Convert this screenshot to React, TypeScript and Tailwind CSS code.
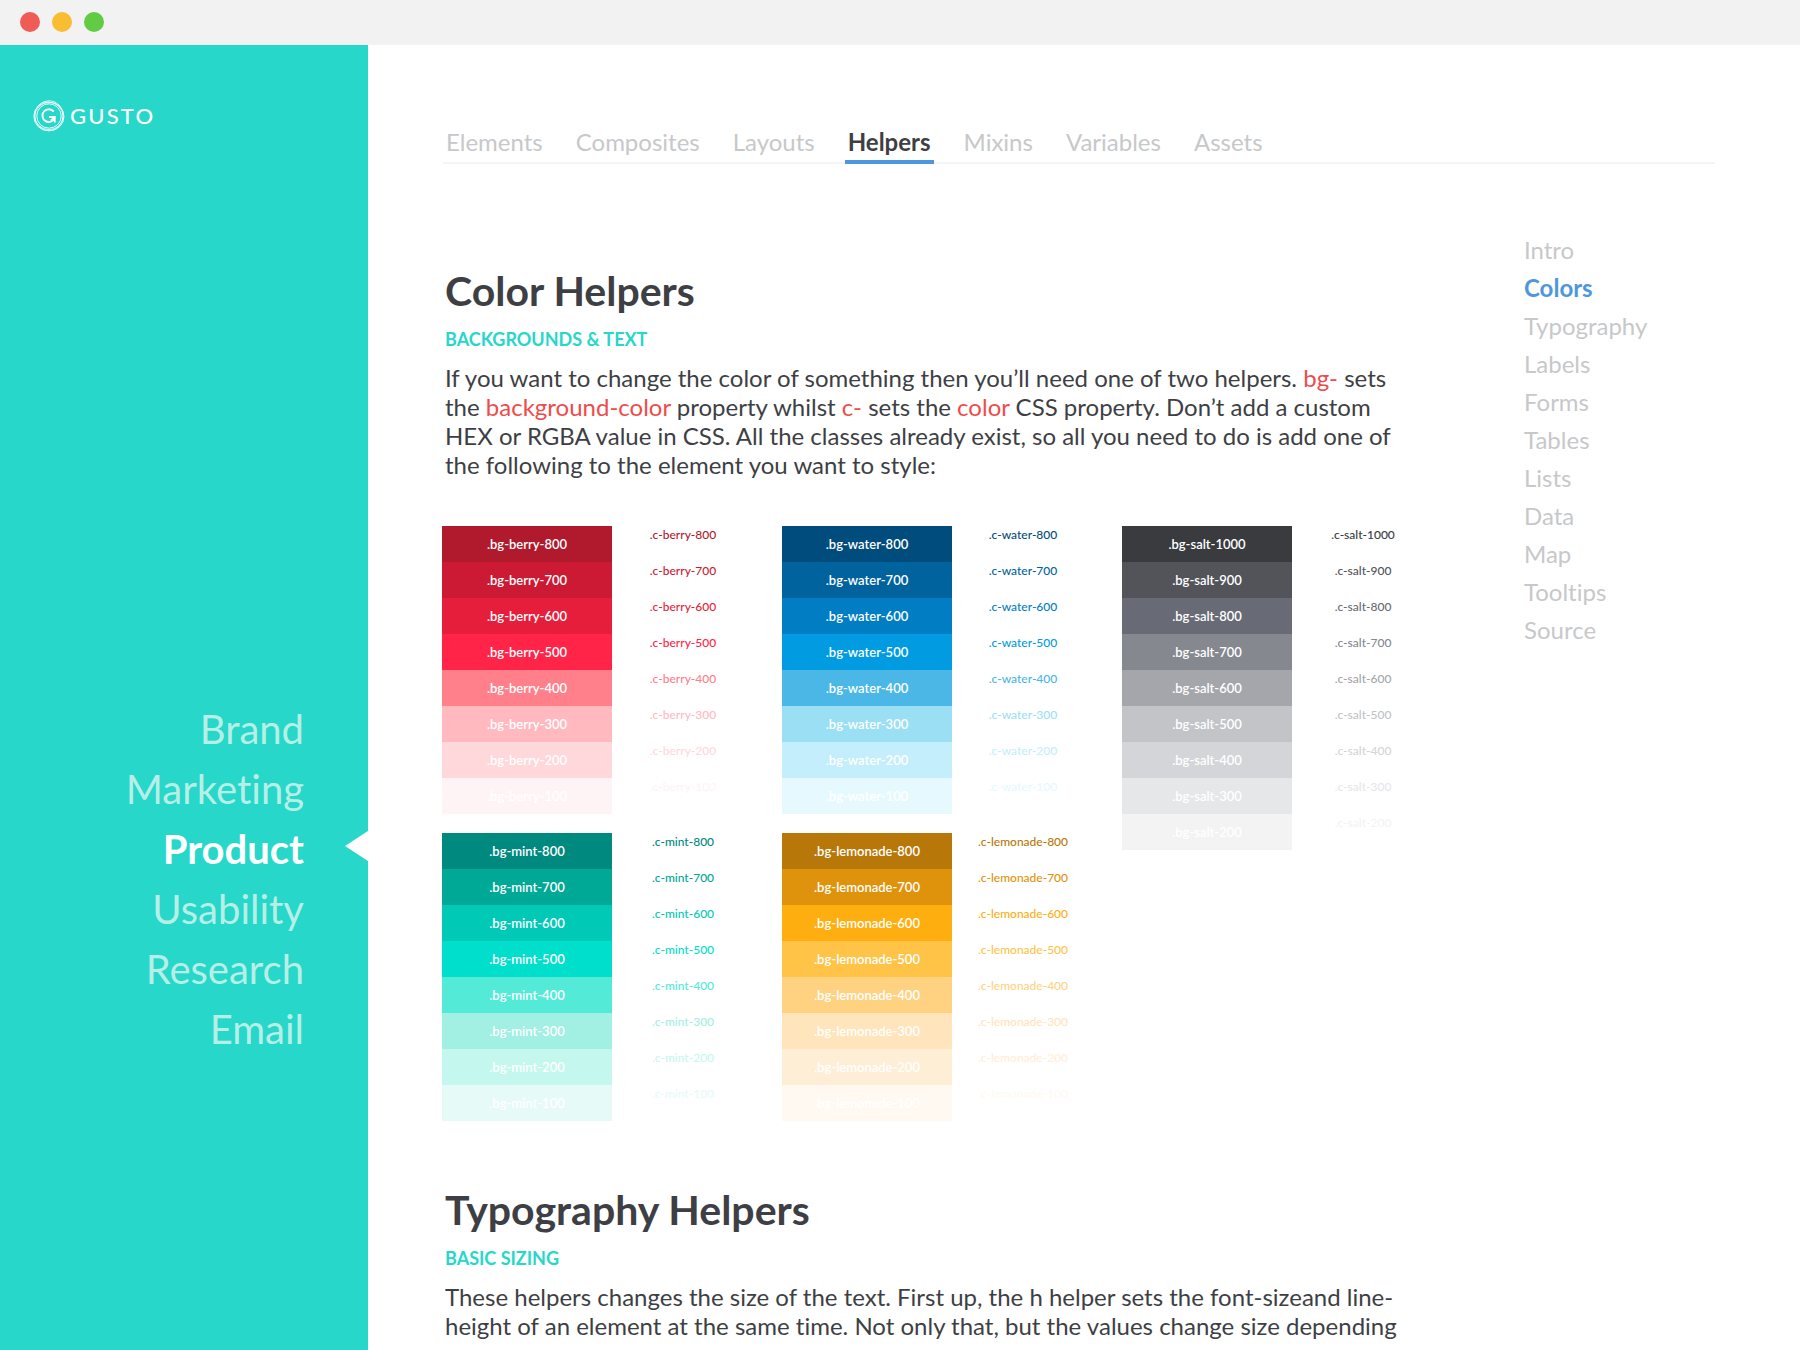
import React from "react";

const sideLinks = ["Brand", "Marketing", "Product", "Usability", "Research", "Email"];
const tabs = ["Elements", "Composites", "Layouts", "Helpers", "Mixins", "Variables", "Assets"];
const anchors = ["Intro", "Colors", "Typography", "Labels", "Forms", "Tables", "Lists", "Data", "Map", "Tooltips", "Source"];

type Shade = { name: string; bg: string; text: string };

const berry: Shade[] = [
  { name: "berry-800", bg: "bg-[#b1192d]", text: "text-[#b1192d]" },
  { name: "berry-700", bg: "bg-[#cc1a34]", text: "text-[#cc1a34]" },
  { name: "berry-600", bg: "bg-[#e61e3b]", text: "text-[#e61e3b]" },
  { name: "berry-500", bg: "bg-[#ff2448]", text: "text-[#ff2448]" },
  { name: "berry-400", bg: "bg-[#ff808b]", text: "text-[#ff808b]" },
  { name: "berry-300", bg: "bg-[#ffb9bf]", text: "text-[#ffb9bf]" },
  { name: "berry-200", bg: "bg-[#ffd8db]", text: "text-[#ffd8db]" },
  { name: "berry-100", bg: "bg-[#fff4f5]", text: "text-[#fff4f5]" },
];

const water: Shade[] = [
  { name: "water-800", bg: "bg-[#004c7c]", text: "text-[#004c7c]" },
  { name: "water-700", bg: "bg-[#00639e]", text: "text-[#00639e]" },
  { name: "water-600", bg: "bg-[#007dc3]", text: "text-[#007dc3]" },
  { name: "water-500", bg: "bg-[#009be1]", text: "text-[#009be1]" },
  { name: "water-400", bg: "bg-[#4ab7e6]", text: "text-[#4ab7e6]" },
  { name: "water-300", bg: "bg-[#9bdff4]", text: "text-[#9bdff4]" },
  { name: "water-200", bg: "bg-[#c4eefb]", text: "text-[#c4eefb]" },
  { name: "water-100", bg: "bg-[#e6f9ff]", text: "text-[#e6f9ff]" },
];

const salt: Shade[] = [
  { name: "salt-1000", bg: "bg-[#3a3b3f]", text: "text-[#3a3b3f]" },
  { name: "salt-900", bg: "bg-[#525459]", text: "text-[#525459]" },
  { name: "salt-800", bg: "bg-[#686b75]", text: "text-[#686b75]" },
  { name: "salt-700", bg: "bg-[#85888f]", text: "text-[#85888f]" },
  { name: "salt-600", bg: "bg-[#a4a6ab]", text: "text-[#a4a6ab]" },
  { name: "salt-500", bg: "bg-[#c2c4c8]", text: "text-[#c2c4c8]" },
  { name: "salt-400", bg: "bg-[#d4d5d8]", text: "text-[#d4d5d8]" },
  { name: "salt-300", bg: "bg-[#e6e7e9]", text: "text-[#e6e7e9]" },
  { name: "salt-200", bg: "bg-[#f3f3f3]", text: "text-[#f3f3f3]" },
];

const mint: Shade[] = [
  { name: "mint-800", bg: "bg-[#00897f]", text: "text-[#00897f]" },
  { name: "mint-700", bg: "bg-[#00a896]", text: "text-[#00a896]" },
  { name: "mint-600", bg: "bg-[#00cab5]", text: "text-[#00cab5]" },
  { name: "mint-500", bg: "bg-[#00dfcb]", text: "text-[#00dfcb]" },
  { name: "mint-400", bg: "bg-[#53ebd8]", text: "text-[#53ebd8]" },
  { name: "mint-300", bg: "bg-[#a1f0e3]", text: "text-[#a1f0e3]" },
  { name: "mint-200", bg: "bg-[#c4f8ee]", text: "text-[#c4f8ee]" },
  { name: "mint-100", bg: "bg-[#e6faf8]", text: "text-[#e6faf8]" },
];

const lemonade: Shade[] = [
  { name: "lemonade-800", bg: "bg-[#b87809]", text: "text-[#b87809]" },
  { name: "lemonade-700", bg: "bg-[#df930c]", text: "text-[#df930c]" },
  { name: "lemonade-600", bg: "bg-[#ffae10]", text: "text-[#ffae10]" },
  { name: "lemonade-500", bg: "bg-[#ffc348]", text: "text-[#ffc348]" },
  { name: "lemonade-400", bg: "bg-[#ffd282]", text: "text-[#ffd282]" },
  { name: "lemonade-300", bg: "bg-[#ffe4bc]", text: "text-[#ffe4bc]" },
  { name: "lemonade-200", bg: "bg-[#ffeed6]", text: "text-[#ffeed6]" },
  { name: "lemonade-100", bg: "bg-[#fff9f1]", text: "text-[#fff9f1]" },
];

function Palette({ shades, className = "" }: { shades: Shade[]; className?: string }) {
  return (
    <ul className={className}>
      {shades.map((s) => (
        <li key={s.name} className="flex h-9">
          <div className={`flex w-[170px] items-center justify-center pt-px text-[13px] font-semibold text-white ${s.bg}`}>.bg-{s.name}</div>
          <div className={`w-[142px] text-center text-[12px] leading-[18px] font-medium ${s.text}`}>.c-{s.name}</div>
        </li>
      ))}
    </ul>
  );
}

function Logo() {
  return (
    <a href="#home" className="flex items-center gap-[5px] text-white">
      <svg width="32" height="32" viewBox="0 0 32 32" fill="none" stroke="currentColor" aria-hidden="true">
        <ellipse cx="16" cy="15.2" rx="14.4" ry="14.5" strokeWidth="0.8" />
        <ellipse cx="15.4" cy="16.4" rx="14.6" ry="14.4" strokeWidth="0.8" />
        <ellipse cx="16.4" cy="16.6" rx="14.6" ry="14.2" strokeWidth="0.8" />
        <circle cx="16" cy="16" r="12.2" strokeWidth="0.9" />
        <path d="M20.8 11.6A6.4 6.4 0 1 0 21.8 18M16.2 17h5.6v5.4M21.8 17l-4 3.6" strokeWidth="1.8" />
      </svg>
      <span className="text-[22px] leading-8 font-medium tracking-widest">GUSTO</span>
    </a>
  );
}

function Code({ children }: { children: React.ReactNode }) {
  return <span className="text-[#f04b4b]">{children}</span>;
}

function SectionHead({ title, label }: { title: string; label: string }) {
  return (
    <>
      <h2 className="text-[41px] leading-[48px] font-bold">{title}</h2>
      <h3 className="mt-3 text-[18px] leading-6 font-bold text-[#26d7ca] uppercase">{label}</h3>
    </>
  );
}

export default function App() {
  return (
    <div className="flex min-h-screen flex-col bg-white font-['Lato',sans-serif] text-[#3e3f44] [font-variant-ligatures:none]">
      <header className="flex h-[45px] items-start gap-3 bg-[#f2f2f2] pt-3 pl-5">
        <button aria-label="Close" className="size-5 rounded-full bg-[#f05b56]" />
        <button aria-label="Minimize" className="size-5 rounded-full bg-[#f8bd32]" />
        <button aria-label="Zoom" className="size-5 rounded-full bg-[#62cb44]" />
      </header>

      <div className="flex flex-1">
        <aside className="w-[368px] shrink-0 bg-[#26d7ca] pt-[55px]">
          <div className="pl-[33px]">
            <Logo />
          </div>
          <nav aria-label="Guides" className="mt-[567px]">
            <ul className="text-right text-[40px] leading-[60px]">
              {sideLinks.map((l) => (
                <li key={l} className="relative pr-16">
                  {l === "Product" ? (
                    <>
                      <a href="#product" aria-current="page" className="font-bold text-white">{l}</a>
                      <svg className="absolute top-3 right-0" width="23" height="30" viewBox="0 0 23 30" aria-hidden="true">
                        <path d="M23 0v30L0 15z" fill="#fff" />
                      </svg>
                    </>
                  ) : (
                    <a href={`#${l.toLowerCase()}`} className="text-[#b7efe6]">{l}</a>
                  )}
                </li>
              ))}
            </ul>
          </nav>
        </aside>

        <main className="min-w-0 flex-1 pt-[81px] pr-[85px] pl-[75px]">
          <nav aria-label="Sections" className="border-b-2 border-[#f5f5f5]">
            <ul className="flex gap-[27px] text-[24px] leading-8">
              {tabs.map((t) => (
                <li key={t} className="-mb-[2px] flex">
                  {t === "Helpers" ? (
                    <a href="#helpers" aria-current="page" className="border-b-4 border-[#4e97df] px-[3px] pb-[2px] font-bold">{t}</a>
                  ) : (
                    <a href={`#${t.toLowerCase()}`} className="px-[3px] pb-[6px] text-[#c7c8ca]">{t}</a>
                  )}
                </li>
              ))}
            </ul>
          </nav>

          <div className="flex justify-between pt-[67px]">
            <article className="max-w-[1010px] pt-9 pl-[2px]">
              <section>
                <SectionHead title="Color Helpers" label="Backgrounds & Text" />
                <p className="mt-3 max-w-[970px] text-[24px] leading-[29px]">
                  If you want to change the color of something then you’ll need one of two helpers. <Code>bg-</Code> sets the{" "}
                  <Code>background-color</Code> property whilst <Code>c-</Code> sets the <Code>color</Code> CSS property. Don’t add a
                  custom HEX or RGBA value in CSS. All the classes already exist, so all you need to do is add one of the following to
                  the element you want to style:
                </p>
                <div className="mt-[47px] -ml-[3px] grid grid-cols-[repeat(3,312px)] gap-x-7 gap-y-[19px]">
                  <Palette shades={berry} />
                  <Palette shades={water} />
                  <Palette shades={salt} className="row-span-2" />
                  <Palette shades={mint} />
                  <Palette shades={lemonade} />
                </div>
              </section>

              <section className="mt-[65px]">
                <SectionHead title="Typography Helpers" label="Basic Sizing" />
                <p className="mt-3 max-w-[970px] text-[24px] leading-[29px]">
                  These helpers changes the size of the text. First up, the h helper sets the font-sizeand line-height of an element at
                  the same time. Not only that, but the values change size depending
                </p>
              </section>
            </article>

            <nav aria-label="On this page" className="w-[191px] shrink-0">
              <ul className="text-[24px] leading-[38px]">
                {anchors.map((a) => (
                  <li key={a}>
                    {a === "Colors" ? (
                      <a href="#colors" aria-current="true" className="font-bold text-[#4e97df]">{a}</a>
                    ) : (
                      <a href={`#${a.toLowerCase()}`} className="text-[#c7c8ca]">{a}</a>
                    )}
                  </li>
                ))}
              </ul>
            </nav>
          </div>
        </main>
      </div>
    </div>
  );
}
